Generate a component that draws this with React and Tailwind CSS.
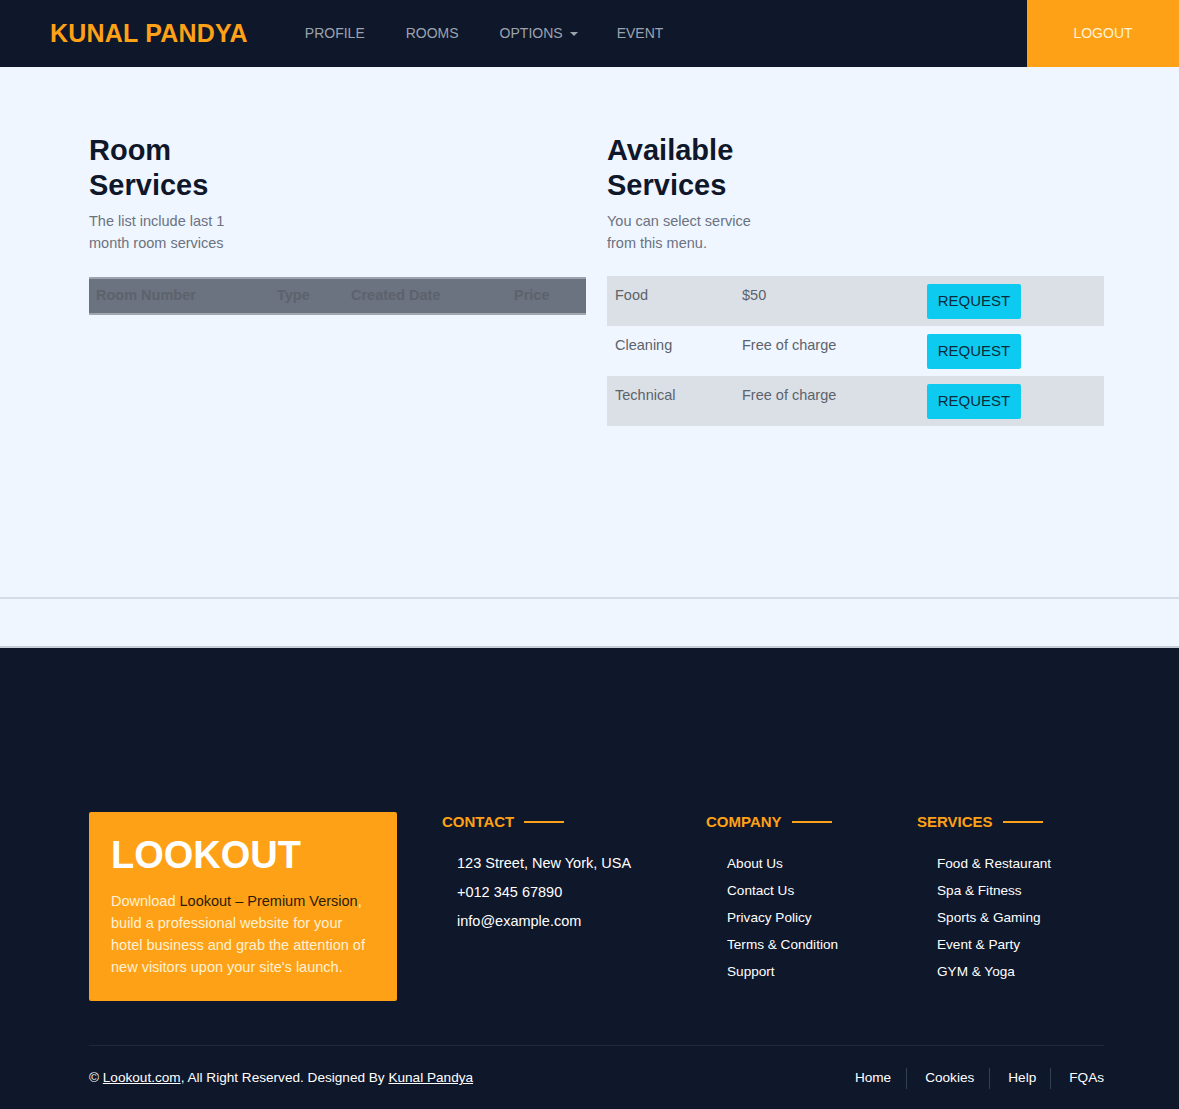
import { useState } from 'react'

const services = [
  { name: 'Food', price: '$50' },
  { name: 'Cleaning', price: 'Free of charge' },
  { name: 'Technical', price: 'Free of charge' },
]

const company = ['About Us', 'Contact Us', 'Privacy Policy', 'Terms & Condition', 'Support']
const serviceLinks = ['Food & Restaurant', 'Spa & Fitness', 'Sports & Gaming', 'Event & Party', 'GYM & Yoga']

function FooterTitle({ children }) {
  return (
    <div className="flex items-center gap-[10px] h-[20px]">
      <span className="text-[15px] font-bold uppercase text-[#fea116]">{children}</span>
      <span className="w-[40px] h-[2px] bg-[#fea116]" />
    </div>
  )
}

export default function App() {
  const [requested, setRequested] = useState([])

  return (
    <div className="min-h-screen flex flex-col bg-[#eff6ff] font-['Liberation_Sans',Arial,sans-serif]">
      {/* Navbar */}
      <nav className="h-[67px] bg-[#0f172a] flex items-stretch">
        <div className="flex items-center pl-[50px] flex-1">
          <span className="text-[25px] font-bold text-[#fea116] tracking-[0.2px]">KUNAL PANDYA</span>
          <div className="flex items-center ml-[57px] text-[14px] text-[#9ca3af]">
            <span>PROFILE</span>
            <span className="ml-[41px]">ROOMS</span>
            <span className="ml-[41px] flex items-center">
              OPTIONS
              <span className="ml-[7px] border-x-[4px] border-x-transparent border-t-[4px] border-t-[#9ca3af]" />
            </span>
            <span className="ml-[39px]">EVENT</span>
          </div>
        </div>
        <button className="w-[152px] bg-[#fea116] text-[14px] text-[#fff3d6]">LOGOUT</button>
      </nav>

      {/* Main */}
      <main className="pt-[66px] pb-[171px] border-b-2 border-[#d5dbe3]">
        <div className="flex gap-[21px] pl-[89px] pr-[75px]">
          <section className="w-[497px]">
            <h2 className="text-[29px] leading-[35px] font-bold text-[#0f172a] w-[170px]">Room Services</h2>
            <p className="mt-[7px] text-[14.5px] leading-[22px] text-[#6b7280] w-[145px]">The list include last 1 month room services</p>
            <div className="mt-[23px] h-[38px] bg-[#6b7280] border-t-2 border-b-2 border-t-[#9ca3af] border-b-[#a1a7b0] flex items-center text-[14.5px] font-bold text-[#5c636c]">
              <span className="pl-[7px] w-[188px]">Room Number</span>
              <span className="w-[74px]">Type</span>
              <span className="w-[163px]">Created Date</span>
              <span>Price</span>
            </div>
          </section>
          <section className="w-[497px]">
            <h2 className="text-[29px] leading-[35px] font-bold text-[#0f172a] w-[170px]">Available Services</h2>
            <p className="mt-[7px] text-[14.5px] leading-[22px] text-[#6b7280] w-[150px]">You can select service from this menu.</p>
            <div className="mt-[22px]">
              {services.map((s, i) => (
                <div key={s.name} className={`h-[50px] flex items-start text-[14.5px] text-[#5c636c] ${i % 2 === 0 ? 'bg-[#dbe0e6]' : ''}`}>
                  <span className="pl-[8px] pt-[9px] w-[135px]">{s.name}</span>
                  <span className="pt-[9px] w-[185px]">{s.price}</span>
                  <button
                    onClick={() => setRequested(r => [...r, s.name])}
                    className="mt-[8px] w-[94px] h-[35px] rounded-[2px] bg-[#0dcaf0] text-[15px] text-[#0a2a3a]"
                  >
                    {requested.includes(s.name) ? 'REQUEST' : 'REQUEST'}
                  </button>
                </div>
              ))}
            </div>
          </section>
        </div>
      </main>
      <div className="h-[49px] border-b-2 border-[#c8ced8]" />

      {/* Footer */}
      <footer className="flex-1 bg-[#0f172a] pt-[164px] px-[75px] pl-[89px]">
        <div className="flex items-start">
          <div className="w-[308px] h-[189px] bg-[#fea116] rounded-[2px] px-[22px] pt-[21px]">
            <div className="text-[38px] leading-[44px] font-bold text-white">LOOKOUT</div>
            <p className="mt-[13px] text-[14.5px] leading-[22px] text-[#fff1d4]">
              Download <span className="text-[#2a1d08]">Lookout – Premium Version</span>, build a professional website for your hotel business and grab the attention of new visitors upon your site's launch.
            </p>
          </div>
          <div className="ml-[45px] w-[264px]">
            <FooterTitle>Contact</FooterTitle>
            <ul className="mt-[17px] pl-[15px] text-[14.5px] leading-[29px] text-white">
              <li>123 Street, New York, USA</li>
              <li>+012 345 67890</li>
              <li>info@example.com</li>
            </ul>
          </div>
          <div className="w-[211px]">
            <FooterTitle>Company</FooterTitle>
            <ul className="mt-[18px] pl-[21px] text-[13.6px] leading-[27px] text-white">
              {company.map(c => <li key={c}>{c}</li>)}
            </ul>
          </div>
          <div className="flex-1">
            <FooterTitle>Services</FooterTitle>
            <ul className="mt-[18px] pl-[20px] text-[13.6px] leading-[27px] text-white">
              {serviceLinks.map(c => <li key={c}>{c}</li>)}
            </ul>
          </div>
        </div>
        <div className="mt-[44px] border-t border-[#1e293b] h-[66px] flex items-center justify-between text-[13.6px] text-white">
          <span>
            © <span className="underline">Lookout.com</span>, All Right Reserved. Designed By <span className="underline">Kunal Pandya</span>
          </span>
          <div className="flex items-center">
            <span className="pr-[15px] border-r border-[#334155]">Home</span>
            <span className="pl-[18px] pr-[15px] border-r border-[#334155]">Cookies</span>
            <span className="pl-[18px] pr-[14px] border-r border-[#334155]">Help</span>
            <span className="pl-[18px]">FQAs</span>
          </div>
        </div>
      </footer>
    </div>
  )
}
